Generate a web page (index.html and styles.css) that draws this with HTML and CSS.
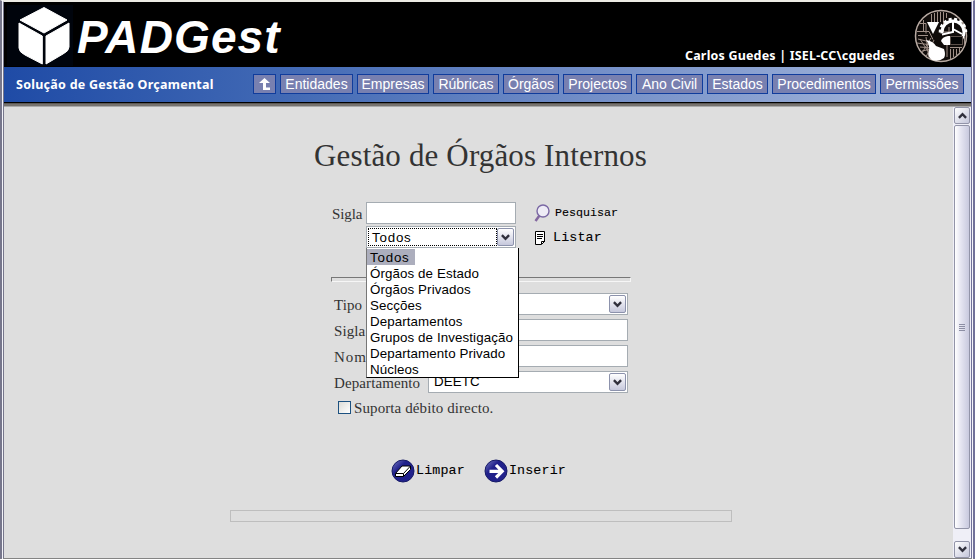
FILE: index.html
```html
<!DOCTYPE html>
<html lang="pt">
<head>
<meta charset="utf-8">
<title>PADGest</title>
<link rel="stylesheet" href="styles.css">
</head>
<body>
<svg class="defs" width="0" height="0">
  <defs>
    <linearGradient id="orb" x1="0" y1="0" x2="1" y2="1"><stop offset="0" stop-color="#7c80c8"/><stop offset=".35" stop-color="#20208a"/><stop offset="1" stop-color="#23238c"/></linearGradient>
    <symbol id="chev" viewBox="0 0 9 7"><path d="M.9 1.2 4.5 4.8 8.1 1.2" fill="none" stroke="#30303c" stroke-width="2.4"/></symbol>
  </defs>
</svg>
<div class="frame">
  <header class="top">
    <svg class="cube" width="66" height="61" viewBox="0 0 66 61">
      <rect width="66" height="61" fill="#00040c"/>
      <g fill="#fff" stroke="#fff" stroke-width="1" stroke-linejoin="round"><path d="M37 2.500 60 15 37 28 13 15Z"/><path d="M12 18 35.300 31V59L18 50Q12 47 12 43Z"/><path d="M62 18 39 31V59L56 49Q62 46 62 42Z"/></g>
    </svg>
    <div class="logo">PADGest</div>
    <div class="user">Carlos Guedes | ISEL-CC\cguedes</div>
    <svg class="emblem" width="54" height="54" viewBox="0 0 54 54">
      <circle cx="27" cy="27" r="25.500" fill="#100c0a" stroke="#b8aaa2" stroke-width="1.500"/>
      <g fill="none" stroke="#a09088" stroke-width="1"><path d="M17.500 5v8M20.500 4v9M23.500 3v10M26.500 3v10M29.500 3v20M32.500 4v5M6 14.500h6v10M9.500 11v12M3 22.500h12l4 8M4 26.500h10M4 30l12 3M3 34l14 2M6 38l12 1M8 42l10-2M6 30l9 14M12 28l3 20M17 29 8 44M20 31 12 48M36 38.500h12M33 36v12M36.500 40v10M39.500 40v8M42.500 40v6M45.500 39v4M30 23h5v-5M50.500 28v8"/></g>
      <circle cx="39" cy="23" r="11" fill="none" stroke="#fff" stroke-width="3" stroke-dasharray="44 26" stroke-dashoffset="-33"/>
      <circle cx="39" cy="23" r="13" fill="none" stroke="#fff" stroke-width="2.500" stroke-dasharray="3 2.500 3 2.500 3 2.500 3 2.500 3 2.500 3 2.500 3 2.500 3 40" stroke-dashoffset="-40"/>
      <path d="M39 12v11l-11 2.500M39 20l9 5" fill="none" stroke="#fff" stroke-width="2"/>
      <path d="M13 13h12l-6 12Z" fill="#fff"/>
      <path d="M27 32q1-4 7-5h8l-6 2v7h-6Z" fill="#fff"/>
      <path d="M12 31q7 1 10 6l8 3q2 6 0 9-5 4-12 2-5-3-3-9 1-6-3-11Z" fill="#fff"/>
      <rect x="36.500" y="27.500" width="12" height="8" fill="#050505" stroke="#5c504a"/>
    </svg>
  </header>
  <nav class="nav">
    <div class="tagline">Solução de Gestão Orçamental</div>
    <div class="menu">
      <a><svg width="11" height="12" viewBox="0 0 11 12"><path d="M5.500 0 11 5H7v4.500h4V12H4V5H0Z" fill="#fff"/></svg></a>
      <a>Entidades</a><a>Empresas</a><a>Rúbricas</a><a>Órgãos</a><a>Projectos</a><a>Ano Civil</a><a>Estados</a><a>Procedimentos</a><a>Permissões</a>
    </div>
  </nav>
  <div class="edge"></div>
  <div class="body">
    <main>
      <h1>Gestão de Órgãos Internos</h1>
      <section class="search">
        <label>Sigla</label><span class="field"></span>
        <a class="cmd small"><svg width="17" height="20" viewBox="0 0 17 20"><path d="M5.500 12.500 1.500 18" stroke="#8468a0" stroke-width="2.500"/><circle cx="9" cy="8" r="6" fill="#eeecf6" stroke="#7a68a4" stroke-width="1.400"/></svg>Pesquisar</a>
        <div class="pick">
          <span class="field select focus"><span>Todos</span><i><svg width="9" height="7"><use href="#chev"/></svg></i></span>
          <ul class="options"><li class="on">Todos</li><li>Órgãos de Estado</li><li>Órgãos Privados</li><li>Secções</li><li>Departamentos</li><li>Grupos de Investigação</li><li>Departamento Privado</li><li>Núcleos</li></ul>
        </div>
        <a class="cmd list"><svg width="12" height="14" viewBox="0 0 12 14"><path d="M1.500.5h9v10l-3 3h-6Z" fill="#fff" stroke="#000"/><path d="M3 3.500h6M3 5.500h6M3 7.500h5M7.500 13v-2.500H11" stroke="#000" fill="none"/></svg>Listar</a>
      </section>
      <hr>
      <section class="form">
        <div class="row"><label>Tipo</label><span class="field select"><span></span><i><svg width="9" height="7"><use href="#chev"/></svg></i></span></div>
        <div class="row"><label>Sigla</label><span class="field"></span></div>
        <div class="row"><label class="wide">Nome</label><span class="field"></span></div>
        <div class="row"><label>Departamento</label><span class="field select"><span>DEETC</span><i><svg width="9" height="7"><use href="#chev"/></svg></i></span></div>
        <div class="check"><b></b><label>Suporta débito directo.</label></div>
      </section>
      <div class="actions">
        <a><svg width="24" height="24" viewBox="0 0 24 24"><circle cx="12" cy="12" r="11" fill="url(#orb)" stroke="#161a66"/><path d="M4.500 14.500 11 7h8.500v3.500l-7 7h-8Z" fill="#fff" stroke="#000"/><path d="M4.500 14.500h8L19.500 7M12.500 14.500v3" fill="none" stroke="#000"/></svg>Limpar</a>
        <a><svg width="24" height="24" viewBox="0 0 24 24"><circle cx="12" cy="12" r="11" fill="url(#orb)" stroke="#161a66"/><path d="M5.500 12.300H17M12 6l6.200 6.300L12 18.500" fill="none" stroke="#fff" stroke-width="3.200"/></svg>Inserir</a>
      </div>
      <div class="status"></div>
    </main>
    <aside class="scroll">
      <b class="btn"><svg class="up" width="9" height="7"><use href="#chev"/></svg></b>
      <div class="thumb"><s></s><s></s><s></s><s></s></div>
      <b class="btn"><svg width="9" height="7"><use href="#chev"/></svg></b>
    </aside>
  </div>
</div>
</body>
</html>
```
FILE: styles.css
```css
* { box-sizing: border-box; }
body { margin: 0; width: 975px; height: 559px; overflow: hidden; background: #dedede; font-family: "Liberation Sans", Arial, sans-serif; }
.defs { position: absolute; }
.frame { height: 559px; border-style: solid; border-width: 2px 4px 1px 4px; border-color: #ecebe4 #71719a #848484 #77778c; display: flex; flex-direction: column; background: #dedede; }
.frame::before, .frame::after { content: ""; position: absolute; top: 0; width: 1px; height: 559px; background: #f4f4fa; }
.frame::before { left: 2px; }
.frame::after { left: 972px; }
.top { height: 65px; background: #000; display: flex; align-items: flex-start; color: #fff; flex: none; }
.cube { margin: 3px 0 0 3px; }
.logo { width: 209px; margin-left: 4px; padding-top: 8px; font: italic bold 46px/54px "Liberation Sans", Arial, sans-serif; letter-spacing: 1.1px; white-space: nowrap; }
.user { width: 216px; margin: 45px 0 0 399px; font: bold 12.5px/17px "Noto Sans", sans-serif; letter-spacing: .18px; white-space: nowrap; }
.emblem { margin: 7px 0 0 13px; flex: none; }
.nav { height: 35px; flex: none; display: flex; background: linear-gradient(90deg, #1f4ba6, #4068b4 28%, #7590c8 62%, #a9badd); }
.tagline { width: 249px; padding: 9px 0 0 12px; color: #fff; font: bold 12.5px/17px "Noto Sans", sans-serif; letter-spacing: .26px; white-space: nowrap; }
.menu { display: grid; grid-template-columns: 23px 73px 72px 66px 56px 69px 67px 61px 104px 84px; gap: 4px; height: 20px; margin-top: 7px; }
.menu a { display: flex; align-items: center; justify-content: center; border: 1px solid #103c9c; background: #7880b0; color: #fff; font-size: 14px; line-height: 18px; white-space: nowrap; }
.edge { height: 5px; flex: none; background: linear-gradient(#000 0 1px, #5c5854 1px 2px, #77736f 2px 4px, #aaa 4px); }
.body { flex: 1; display: flex; min-height: 0; }
main { flex: 1; position: relative; color: #333; }
h1 { margin: 31px 0 0 310px; width: 340px; font: 31px/36px "Liberation Serif", serif; white-space: nowrap; letter-spacing: .15px; }
.search { display: grid; grid-template-columns: 34px 150px 1fr; grid-template-rows: 22px 22px; row-gap: 2px; margin: 28px 0 0 328px; }
.search > .pick { grid-column: 2; position: relative; }
label { font: 15px/24px "Liberation Serif", serif; letter-spacing: .1px; white-space: nowrap; }
.search label { letter-spacing: -.1px; }
label.wide { letter-spacing: 1px; }
.field { display: block; height: 22px; border: 1px solid #a5acb2; background: #fff; }
.select { display: flex; justify-content: space-between; padding: 1px; font-size: 13.33px; line-height: 18px; letter-spacing: .1px; color: #000; }
.select > span { flex: 1; padding-left: 4px; }
.select.focus > span { border: 1px dotted #000; line-height: 17px; padding-left: 3px; letter-spacing: .8px; }
.select i { width: 17px; border: 1px solid #8c92ac; border-radius: 2px; background: linear-gradient(#fff, #c6c8dc); display: flex; align-items: center; justify-content: center; }
.options { position: absolute; z-index: 2; left: 0; top: 22px; width: 153px; height: 130px; margin: 0; padding: 1px 0 0; list-style: none; background: #fff; border: solid #000; border-width: 0 1px 1px 0; border-left: 1px solid #777; color: #000; font-size: 13.33px; line-height: 17px; letter-spacing: .1px; white-space: nowrap; }
.options li { padding-left: 3px; height: 16px; }
.options .on { width: 48px; background: #acaebd; letter-spacing: .8px; }
.cmd, .actions a { display: flex; align-items: center; color: #000; font: 13.33px/22px "Liberation Mono", monospace; letter-spacing: .15px; -webkit-text-stroke: .1px #000; }
.cmd { padding-left: 18px; gap: 7px; }
.cmd.small { font-size: 11.67px; gap: 4px; letter-spacing: 0; }
.cmd.list { padding-top: 2px; }
hr { width: 300px; height: 5px; margin: 29px 0 0 327px; border: 1px solid; border-color: #777 #f6f6f6 #f6f6f6 #777; }
.form { width: 294px; margin: 11px 0 0 330px; display: flex; flex-direction: column; gap: 4px; }
.row { display: grid; grid-template-columns: 94px 200px; height: 22px; }
.check { display: flex; height: 22px; padding: 4px 0 0 4px; }
.check b { width: 13px; height: 13px; border: 1px solid #1c5180; background: linear-gradient(135deg, #dcdcd7, #fff); }
.check label { line-height: 20px; margin: -3px 0 0 3px; }
.actions { display: flex; gap: 19px; margin: 40px 0 0 387px; }
.actions a { height: 24px; gap: 1px; }
.status { width: 502px; height: 12px; margin: 27px 0 0 226px; border: 1px solid #bebebe; }
.scroll { width: 18px; padding: 0 1px; background: #efeff7; display: flex; flex-direction: column; gap: 1px; }
.btn { height: 17px; flex: none; border: 1px solid #9294a8; border-radius: 2px; background: linear-gradient(135deg, #fff, #c4c6da); display: flex; align-items: center; justify-content: center; }
.up { transform: rotate(180deg); }
.thumb { height: 405px; margin-bottom: 11px; border: 1px solid #9294a8; border-radius: 2px; background: linear-gradient(90deg, #fff, #e6e6f2 40%, #c8c9de); display: flex; flex-direction: column; align-items: center; justify-content: center; gap: 1px; }
.thumb s { width: 6px; height: 1px; background: #8c8ea4; }
```
